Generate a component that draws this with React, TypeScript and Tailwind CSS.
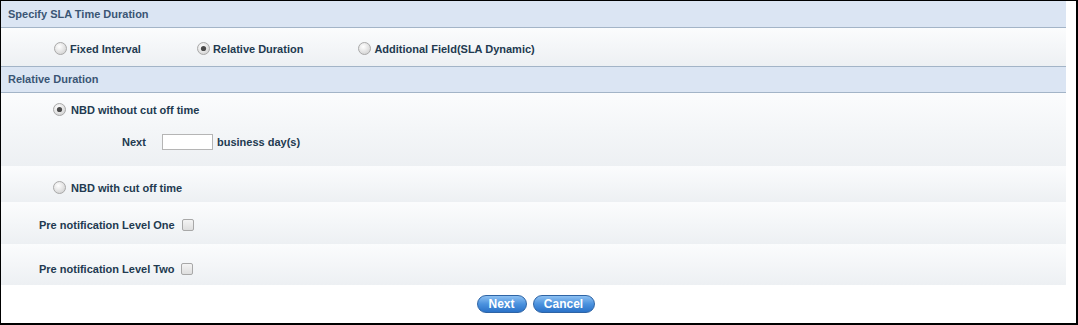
import React from 'react';

const Radio = ({ checked = false }: { checked?: boolean }) => (
  <svg width="13" height="13" viewBox="0 0 13 13" className="shrink-0 -mt-[2px]">
    <defs>
      <radialGradient id={checked ? 'rc' : 'ru'} cx="40%" cy="35%" r="70%">
        <stop offset="0%" stopColor="#ffffff" />
        <stop offset="100%" stopColor="#d2d2d2" />
      </radialGradient>
    </defs>
    <circle cx="6.5" cy="6.5" r="6" fill={`url(#${checked ? 'rc' : 'ru'})`} stroke="#a9a9a9" strokeWidth="1" />
    {checked && <circle cx="6.5" cy="6.5" r="2.6" fill="#4a4a4a" />}
  </svg>
);

const Checkbox = () => (
  <span className="inline-block w-[12px] h-[12px] rounded-[2px] border border-[#a8a8a8] bg-gradient-to-b from-[#f4f4f4] to-[#dedede] shrink-0" />
);

const Header = ({ title, top = false }: { title: string; top?: boolean }) => (
  <div
    className={
      'h-[27px] flex items-center pl-[7px] bg-[#dbe5f3] border-b border-[#a3b4c7] text-[11px] font-bold text-[#3a5574] ' +
      (top ? '' : 'border-t')
    }
  >
    {title}
  </div>
);

const RowBg = 'bg-gradient-to-b from-[#fbfcfd] to-[#edf0f3]';

export default function App() {
  return (
    <div
      className="w-[1078px] h-[325px] bg-white border-l border-t border-r-2 border-b-2 border-black overflow-hidden"
      style={{ fontFamily: '"Liberation Sans", Arial, sans-serif' }}
    >
      <div className="w-[1065px] h-full flex flex-col text-[11px] font-bold text-[#223a50]">
        <Header title="Specify SLA Time Duration" top />

        <div className={'h-[38px] flex items-center pt-[4px] ' + RowBg}>
          <div className="flex items-center gap-[3px] ml-[53px]">
            <Radio />
            <span>Fixed Interval</span>
          </div>
          <div className="flex items-center gap-[3px] ml-[56px]">
            <Radio checked />
            <span>Relative Duration</span>
          </div>
          <div className="flex items-center gap-[3px] ml-[55px]">
            <Radio />
            <span>Additional Field(SLA Dynamic)</span>
          </div>
        </div>

        <Header title="Relative Duration" />

        <div className={'h-[73px] flex flex-col ' + RowBg}>
          <div className="flex items-center gap-[5px] ml-[52px] mt-[10px] h-[14px]">
            <Radio checked />
            <span>NBD without cut off time</span>
          </div>
          <div className="flex items-center ml-[121px] mt-[17px]">
            <span className="w-[40px]">Next</span>
            <span className="w-[51px] h-[16px] border border-[#b5b5b5] bg-white" />
            <span className="ml-[4px]">business day(s)</span>
          </div>
        </div>

        <div className={'h-[36px] flex items-center pt-[8px] ' + RowBg}>
          <div className="flex items-center gap-[5px] ml-[52px]">
            <Radio />
            <span>NBD with cut off time</span>
          </div>
        </div>

        <div className={'h-[42px] flex items-center pt-[3px] border-t border-[#fbfcfd] ' + RowBg}>
          <div className="flex items-center gap-[7px] ml-[38px]">
            <span>Pre notification Level One</span>
            <Checkbox />
          </div>
        </div>

        <div className={'h-[41px] flex items-center pt-[9px] ' + RowBg}>
          <div className="flex items-center gap-[7px] ml-[38px]">
            <span>Pre notification Level Two</span>
            <Checkbox />
          </div>
        </div>

        <div className="flex-1 flex items-start justify-center pt-[10px] gap-[6px]">
          <button className="h-[18px] w-[50px] rounded-full border border-[#2e64a5] bg-gradient-to-b from-[#8cc0f2] via-[#4b92de] to-[#2a72c8] text-white text-[12px] font-bold leading-none ml-[4px]">
            Next
          </button>
          <button className="h-[18px] w-[62px] rounded-full border border-[#2e64a5] bg-gradient-to-b from-[#8cc0f2] via-[#4b92de] to-[#2a72c8] text-white text-[12px] font-bold leading-none">
            Cancel
          </button>
        </div>
      </div>
    </div>
  );
}
